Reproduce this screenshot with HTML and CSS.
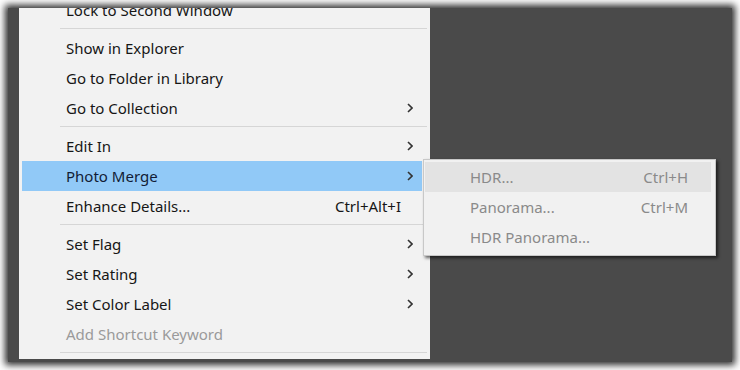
FILE: index.html
```html
<!DOCTYPE html>
<html lang="en">
<head>
    <meta charset="UTF-8">
    <meta name="viewport" content="width=device-width, initial-scale=1.0">
    <title>Photo Merge Menu</title>
    <link rel="stylesheet" href="styles.css">
</head>
<body>
    <div class="screen">
        <ul class="menu">
            <li class="item">Lock to Second Window</li>
            <li class="separator"></li>
            <li class="item">Show in Explorer</li>
            <li class="item">Go to Folder in Library</li>
            <li class="item has-sub">Go to Collection
                <svg class="chevron" viewBox="0 0 6 10"><polyline points="1,1 5,5 1,9"/></svg>
            </li>
            <li class="separator"></li>
            <li class="item has-sub">Edit In
                <svg class="chevron" viewBox="0 0 6 10"><polyline points="1,1 5,5 1,9"/></svg>
            </li>
            <li class="item has-sub active">Photo Merge
                <svg class="chevron" viewBox="0 0 6 10"><polyline points="1,1 5,5 1,9"/></svg>
            </li>
            <li class="item">Enhance Details...<span class="shortcut">Ctrl+Alt+I</span></li>
            <li class="separator"></li>
            <li class="item has-sub">Set Flag
                <svg class="chevron" viewBox="0 0 6 10"><polyline points="1,1 5,5 1,9"/></svg>
            </li>
            <li class="item has-sub">Set Rating
                <svg class="chevron" viewBox="0 0 6 10"><polyline points="1,1 5,5 1,9"/></svg>
            </li>
            <li class="item has-sub">Set Color Label
                <svg class="chevron" viewBox="0 0 6 10"><polyline points="1,1 5,5 1,9"/></svg>
            </li>
            <li class="item disabled">Add Shortcut Keyword</li>
            <li class="separator"></li>
        </ul>

        <ul class="submenu">
            <li class="item hover">HDR...<span class="shortcut">Ctrl+H</span></li>
            <li class="item">Panorama...<span class="shortcut">Ctrl+M</span></li>
            <li class="item">HDR Panorama...</li>
        </ul>
    </div>
</body>
</html>
```

FILE: styles.css
```css
* {
    box-sizing: border-box;
    margin: 0;
    padding: 0;
}

body {
    background: #ffffff;
    font-family: 'Noto Sans', 'Open Sans', sans-serif;
    font-size: 15px;
    padding: 8px;
    width: 740px;
    height: 370px;
    overflow: hidden;
}

.screen {
    position: relative;
    width: 724px;
    height: 354px;
    background: #4a4a4a;
    box-shadow: 0 0 7px 3px rgba(20, 20, 20, 0.9);
    overflow: hidden;
    padding-left: 11px;
}

.menu {
    list-style: none;
    width: 411px;
    background: #f2f2f2;
    margin-top: -13px;
    padding: 0 8px 2px 3px;
    color: #161616;
}

.item {
    display: flex;
    align-items: center;
    height: 30px;
    padding-left: 44px;
    padding-right: 21px;
    position: relative;
    white-space: nowrap;
}

.item .shortcut {
    margin-left: auto;
}

.item.active {
    background: #91c9f7;
    color: #121c36;
}

.item.disabled {
    color: #9a9a9a;
}

.chevron {
    position: absolute;
    right: 9px;
    top: 10px;
    width: 6px;
    height: 10px;
    fill: none;
    stroke: #333333;
    stroke-width: 1.6;
}

.separator {
    height: 8px;
    margin: 0 -5px 0 38px;
    position: relative;
}

.separator::after {
    content: '';
    position: absolute;
    left: 0;
    right: 0;
    top: 3px;
    height: 1px;
    background: #d6d6d6;
}

.submenu {
    position: absolute;
    left: 415px;
    top: 151px;
    width: 293px;
    list-style: none;
    background: #f1f1f1;
    border: 1px solid #c8c8c8;
    padding: 2px 4px 3px 1px;
    color: #8a8a8a;
    box-shadow: 2px 2px 3px rgba(0, 0, 0, 0.6);
}

.submenu .item {
    padding-left: 45px;
    padding-right: 23px;
}

.submenu .item.hover {
    background: #e3e3e3;
}
```
